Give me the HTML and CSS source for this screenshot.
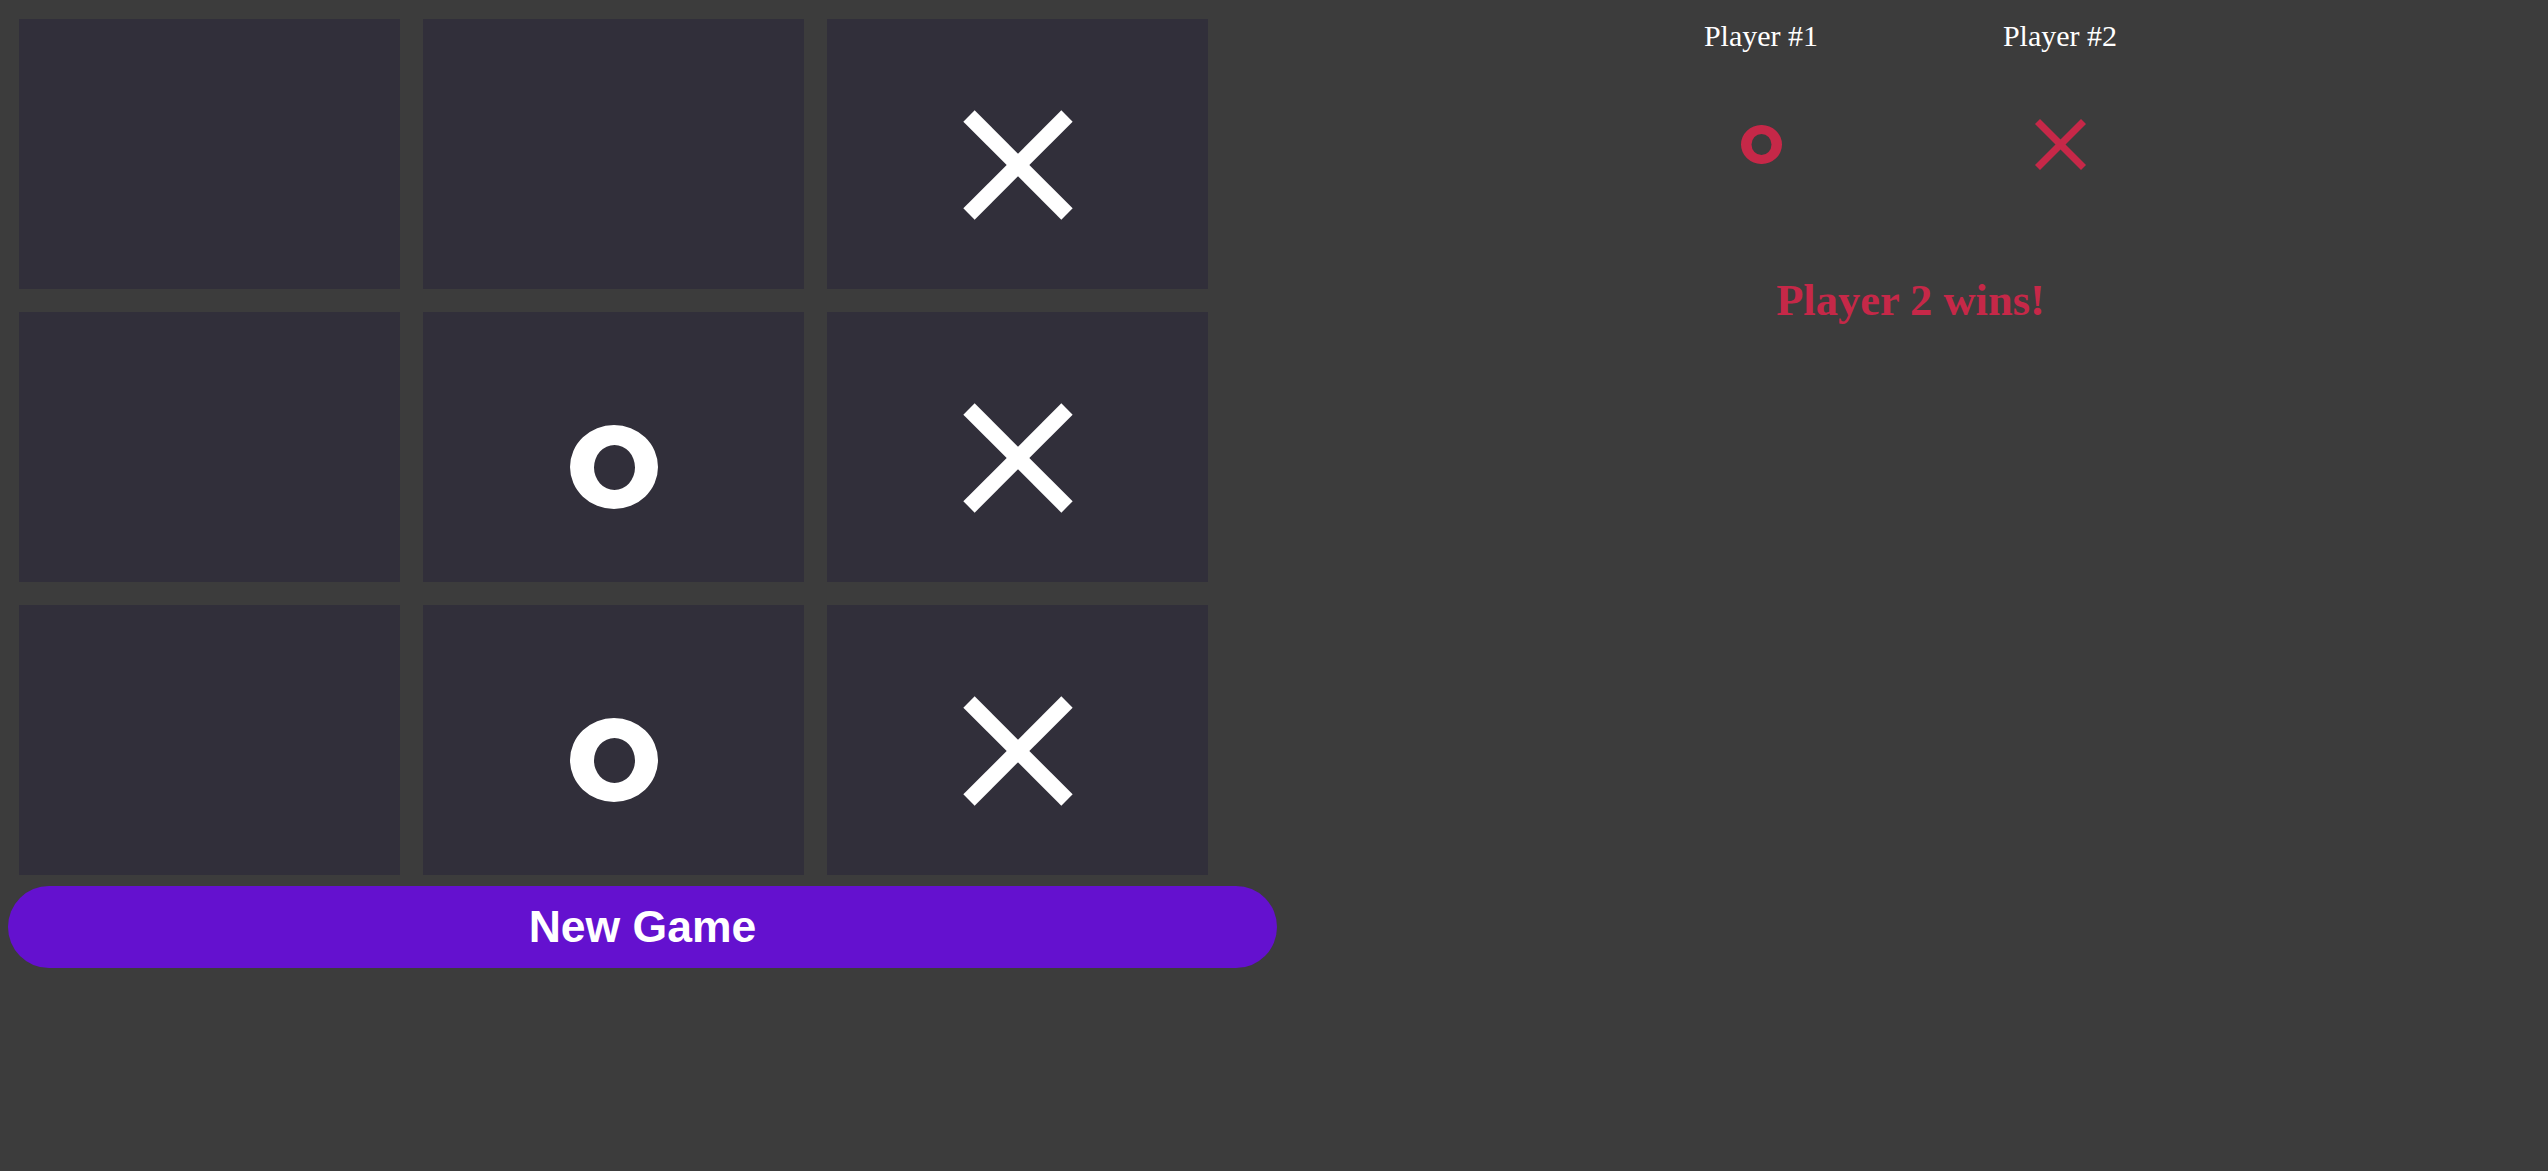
FILE: index.html
```html
<!DOCTYPE html>
<html lang="en">
<head>
<meta charset="utf-8">
<title>Tic Tac Toe</title>
<link rel="stylesheet" href="styles.css">
</head>
<body>
<div class="page">
  <section class="game">
    <div class="board">
      <div class="cell"></div>
      <div class="cell"></div>
      <div class="cell"><svg class="mark-x" viewBox="0 0 110 110" width="110" height="110"><line x1="6" y1="6" x2="104" y2="104"/><line x1="104" y1="6" x2="6" y2="104"/></svg></div>
      <div class="cell"></div>
      <div class="cell"><svg class="mark-o" viewBox="0 0 88 84" width="88" height="84"><path fill-rule="evenodd" d="M0 42a44 42 0 1 0 88 0a44 42 0 1 0 -88 0z M24 42.5a20.5 22.5 0 1 0 41 0a20.5 22.5 0 1 0 -41 0z"/></svg></div>
      <div class="cell"><svg class="mark-x" viewBox="0 0 110 110" width="110" height="110"><line x1="6" y1="6" x2="104" y2="104"/><line x1="104" y1="6" x2="6" y2="104"/></svg></div>
      <div class="cell"></div>
      <div class="cell"><svg class="mark-o" viewBox="0 0 88 84" width="88" height="84"><path fill-rule="evenodd" d="M0 42a44 42 0 1 0 88 0a44 42 0 1 0 -88 0z M24 42.5a20.5 22.5 0 1 0 41 0a20.5 22.5 0 1 0 -41 0z"/></svg></div>
      <div class="cell"><svg class="mark-x" viewBox="0 0 110 110" width="110" height="110"><line x1="6" y1="6" x2="104" y2="104"/><line x1="104" y1="6" x2="6" y2="104"/></svg></div>
    </div>
    <button class="new-game">New Game</button>
  </section>
  <aside class="status">
    <div class="players">
      <div class="player">
        <div class="player-name">Player #1</div>
        <div class="player-icon"><svg viewBox="0 0 41 39" width="41" height="39"><path fill-rule="evenodd" d="M0 19.5a20.5 19.5 0 1 0 41 0a20.5 19.5 0 1 0 -41 0z M10.5 19.5a10 10.5 0 1 0 20 0a10 10.5 0 1 0 -20 0z"/></svg></div>
      </div>
      <div class="player">
        <div class="player-name">Player #2</div>
        <div class="player-icon"><svg class="small-x" viewBox="0 0 51 51" width="51" height="51"><line x1="2.5" y1="2.5" x2="48.5" y2="48.5"/><line x1="48.5" y1="2.5" x2="2.5" y2="48.5"/></svg></div>
      </div>
    </div>
    <h1 class="winner">Player 2 wins!</h1>
  </aside>
</div>
</body>
</html>
```

FILE: styles.css
```css
html, body {
  margin: 0;
  padding: 0;
  background: #3c3c3c;
}

body {
  width: 2548px;
  height: 1171px;
  overflow: hidden;
}

.page {
  display: flex;
  padding: 0 4px 0 8px;
}

.game {
  width: 1269px;
  flex: none;
  display: flex;
  flex-direction: column;
}

.board {
  display: grid;
  grid-template-columns: repeat(3, 381px);
  grid-template-rows: repeat(3, 270px);
  gap: 23px;
  margin: 19px 0 0 11px;
}

.cell {
  background: #312f3a;
  display: flex;
  align-items: center;
  justify-content: center;
}

.mark-x {
  margin-top: 22px;
  stroke: #ffffff;
  stroke-width: 16;
  stroke-linecap: butt;
}

.mark-o {
  margin-top: 40px;
  fill: #ffffff;
}

.new-game {
  margin-top: 11px;
  height: 82px;
  width: 1269px;
  border: none;
  border-radius: 999px;
  background: #6411cf;
  color: #ffffff;
  font-family: "Liberation Sans", Arial, sans-serif;
  font-weight: bold;
  font-size: 44.5px;
  padding: 0;
  display: flex;
  align-items: center;
  justify-content: center;
}

.status {
  flex: 1;
  display: flex;
  flex-direction: column;
  align-items: center;
  padding-top: 19px;
  font-family: "Liberation Serif", "Times New Roman", serif;
}

.players {
  display: flex;
  gap: 149px;
}

.player {
  width: 150px;
  display: flex;
  flex-direction: column;
  align-items: center;
}

.player-name {
  color: #ffffff;
  font-size: 30px;
  line-height: 34px;
  white-space: nowrap;
}

.player-icon {
  margin-top: 66px;
  height: 51px;
  display: flex;
  align-items: center;
  justify-content: center;
  fill: #c62848;
}

.small-x {
  stroke: #c62848;
  stroke-width: 7;
}

.winner {
  margin: 105px 0 0;
  color: #c62848;
  font-size: 44.5px;
  font-weight: bold;
  line-height: 51px;
}
```
